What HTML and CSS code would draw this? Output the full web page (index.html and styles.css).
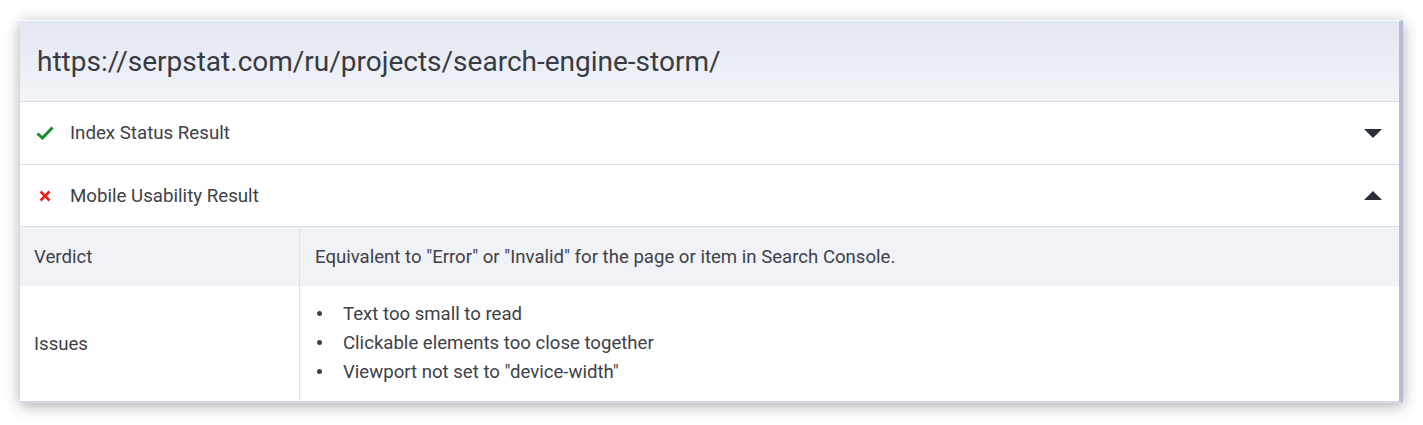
FILE: index.html
```html
<!DOCTYPE html>
<html lang="ru">
<head>
  <meta charset="UTF-8">
  <title>Inspection result</title>
  <link rel="stylesheet" href="styles.css">
</head>
<body>
  <div class="card">
    <div class="card-head">https://serpstat.com/ru/projects/search-engine-storm/</div>

    <div class="acc-row">
      <svg class="status" width="18" height="14" viewBox="0 0 18 14">
        <path d="M1.5 7.5 L6.5 12 L16.5 1.5" fill="none" stroke="#1b8a2c" stroke-width="3"/>
      </svg>
      <span class="acc-title">Index Status Result</span>
      <span class="caret caret-down"></span>
    </div>

    <div class="acc-row">
      <svg class="status" width="18" height="14" viewBox="0 0 18 14">
        <path d="M4.5 2.5 L13.5 11.5 M13.5 2.5 L4.5 11.5" fill="none" stroke="#ee1c1c" stroke-width="2.6"/>
      </svg>
      <span class="acc-title">Mobile Usability Result</span>
      <span class="caret caret-up"></span>
    </div>

    <table class="details">
      <tr class="shaded">
        <td class="label">Verdict</td>
        <td>Equivalent to "Error" or "Invalid" for the page or item in Search Console.</td>
      </tr>
      <tr>
        <td class="label">Issues</td>
        <td>
          <ul class="issues">
            <li>Text too small to read</li>
            <li>Clickable elements too close together</li>
            <li>Viewport not set to "device-width"</li>
          </ul>
        </td>
      </tr>
    </table>
  </div>
</body>
</html>
```

FILE: styles.css
```css
body {
  margin: 0;
  padding: 20px 20px 22px 20px;
  background: #fff;
  font-family: Roboto, "Liberation Sans", sans-serif;
  color: #3b3e45;
}

.card {
  width: 1379px;
  background: #fff;
  border-top: 1px solid #fafbfd;
  border-right: 4px solid #b3bdd3;
  border-bottom: 2px solid #d3d9e7;
  box-shadow: 0 3px 14px rgba(0, 0, 0, 0.32);
}

.card-head {
  height: 80px;
  padding-left: 17px;
  display: flex;
  align-items: center;
  font-size: 28px;
  color: #383b42;
  background: linear-gradient(#e3e7f1, #f2f4f9);
  border-bottom: 1px solid #d7dce8;
}

.acc-row {
  height: 62px;
  display: flex;
  align-items: center;
  padding: 0 17px 0 16px;
  border-bottom: 1px solid #d6ddec;
}

.acc-row:nth-of-type(3) {
  height: 61px;
}

.status {
  margin-right: 16px;
}

.acc-title {
  flex: 1;
  font-size: 18.7px;
  color: #3e4148;
}

.caret {
  width: 0;
  height: 0;
  border-left: 9px solid transparent;
  border-right: 9px solid transparent;
}

.caret-down {
  border-top: 9px solid #2b2f3a;
}

.caret-up {
  border-bottom: 9px solid #2b2f3a;
}

.details {
  width: 100%;
  border-collapse: collapse;
  font-size: 18.6px;
  color: #3e4148;
}

.details td {
  padding: 0 15px;
  vertical-align: middle;
}

.details td.label {
  width: 250px;
  padding-left: 14px;
  border-right: 1px solid #d9e0ee;
}

.details tr.shaded {
  height: 59px;
  background: #f0f2f7;
}

.details tr:last-child {
  height: 115px;
}

.issues {
  margin: 0;
  padding: 0;
  list-style: none;
}

.issues li {
  line-height: 29px;
}

/* round bullet drawn as a dot */
.issues li::before {
  content: "";
  display: inline-block;
  width: 5px;
  height: 5px;
  border-radius: 50%;
  background: #3e4148;
  margin: 0 21px 0 2px;
  vertical-align: 4px;
}
```
